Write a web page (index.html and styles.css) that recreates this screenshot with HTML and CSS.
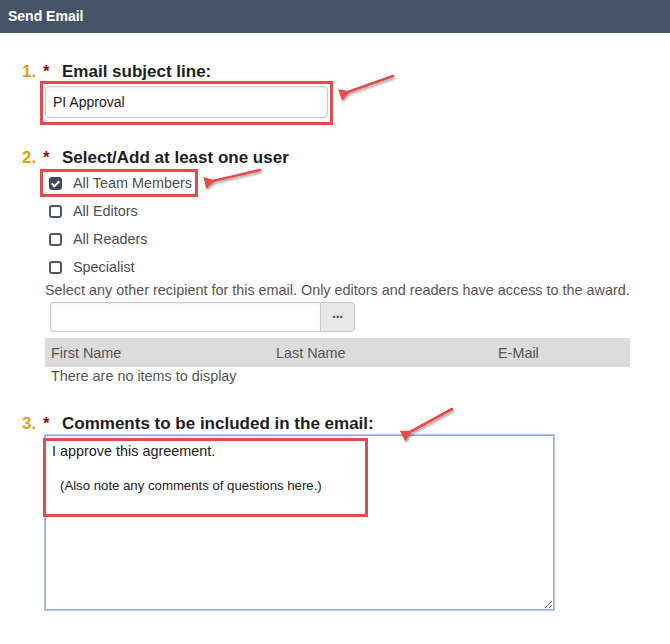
FILE: index.html
```html
<!DOCTYPE html>
<html lang="en">
<head>
    <meta charset="UTF-8">
    <title>Send Email</title>
    <link rel="stylesheet" href="styles.css">
</head>
<body>
    <div class="panel-title">Send Email</div>

    <div class="form">
        <div class="step step-subject">
            <h3 class="step-title"><span class="num">1.</span><span class="req">*</span>Email subject line:</h3>
            <div class="mark mark-input">
                <input class="text-input" type="text" value="PI Approval">
            </div>
        </div>

        <div class="step step-users">
            <h3 class="step-title"><span class="num">2.</span><span class="req">*</span>Select/Add at least one user</h3>
            <ul class="check-list">
                <li class="check-row marked"><span class="box checked"></span>All Team Members</li>
                <li class="check-row"><span class="box"></span>All Editors</li>
                <li class="check-row"><span class="box"></span>All Readers</li>
                <li class="check-row"><span class="box"></span>Specialist</li>
            </ul>
            <p class="hint">Select any other recipient for this email. Only editors and readers have access to the award.</p>
            <div class="picker">
                <input class="picker-input" type="text">
                <button class="picker-btn">&middot;&middot;&middot;</button>
            </div>
            <table class="grid">
                <thead>
                    <tr><th class="col-first">First Name</th><th class="col-last">Last Name</th><th>E-Mail</th></tr>
                </thead>
                <tbody>
                    <tr><td colspan="3">There are no items to display</td></tr>
                </tbody>
            </table>
        </div>

        <div class="step step-comments">
            <h3 class="step-title"><span class="num">3.</span><span class="req">*</span>Comments to be included in the email:</h3>
            <div class="comment-wrap">
                <div class="comment-box">
                    <div class="line-main">I approve this agreement.</div>
                    <div class="line-note">(Also note any comments of questions here.)</div>
                </div>
                <div class="mark mark-overlay"></div>
            </div>
        </div>
    </div>

    <!-- callout arrows -->
    <svg class="arrows" width="670" height="644" viewBox="0 0 670 644">
        <defs>
            <marker id="head" markerWidth="6" markerHeight="6" refX="1" refY="3" orient="auto" markerUnits="strokeWidth">
                <path d="M0,3 L4.2,0.7 L4.2,5.3 Z" fill="#e64b4b"/>
            </marker>
            <filter id="shade" x="-20%" y="-20%" width="140%" height="160%">
                <feDropShadow dx="1" dy="2" stdDeviation="1.2" flood-color="#000" flood-opacity="0.35"/>
            </filter>
        </defs>
        <g stroke="#e64b4b" stroke-width="2.6" stroke-linecap="round" fill="none" filter="url(#shade)">
            <line x1="393" y1="76" x2="348" y2="92" marker-end="url(#head)"/>
            <line x1="260" y1="170" x2="213" y2="181" marker-end="url(#head)"/>
            <line x1="452" y1="409" x2="410" y2="432" marker-end="url(#head)"/>
        </g>
    </svg>
</body>
</html>
```

FILE: styles.css
```css
body {
    margin: 0;
    font-family: "Liberation Sans", Arial, sans-serif;
    background: #fff;
    color: #222;
    position: relative;
    height: 644px;
    overflow: hidden;
}
.panel-title {
    height: 33px;
    line-height: 33px;
    padding-left: 8px;
    background: #465468;
    color: #fff;
    font-size: 14px;
    font-weight: bold;
}
.form {
    padding-left: 22px;
}
.step-title {
    margin: 0;
    font-size: 17px;
    line-height: 19px;
    font-weight: bold;
    color: #1e1e1e;
    display: flex;
}
.num {
    color: #e29c12;
    width: 21px;
}
.req {
    color: #a3070b;
    width: 19px;
}
.step-subject {
    padding-top: 29px;
}
.mark {
    border: 3px solid #e64b4b;
}
.mark-input {
    margin-left: 18px;
    padding: 2px;
    box-sizing: border-box;
    width: 293px;
    height: 44px;
}
.text-input {
    width: 283px;
    height: 32px;
    box-sizing: border-box;
    border: 1px solid #c8c8c8;
    border-radius: 4px;
    padding: 0 7px;
    font-family: inherit;
    font-size: 14px;
    color: #222;
    box-shadow: inset 0 1px 2px rgba(0, 0, 0, 0.08);
}
.step-users {
    padding-top: 23px;
}
.step-users .step-title {
    margin-bottom: 2px;
}
.check-list {
    list-style: none;
    margin: 0 0 0 18px;
    padding: 0;
}
.check-row {
    display: flex;
    align-items: center;
    width: fit-content;
    height: 28px;
    box-sizing: border-box;
    border: 3px solid transparent;
    padding: 0 3px 0 6px;
    font-size: 14.4px;
    color: #4d4d4d;
}
.check-row.marked {
    border-color: #e64b4b;
}
.box {
    width: 13px;
    height: 13px;
    box-sizing: border-box;
    border: 2px solid #4b5667;
    border-radius: 3px;
    margin-right: 11px;
    position: relative;
}
.box.checked {
    background: #3e4a5c;
    border-color: #3e4a5c;
}
.box.checked::after {
    content: "";
    position: absolute;
    left: 2px;
    top: 0;
    width: 3px;
    height: 6px;
    border: solid #fff;
    border-width: 0 2px 2px 0;
    transform: rotate(45deg);
}
.hint {
    margin: 1px 0 0 23px;
    font-size: 14.4px;
    line-height: 16px;
    color: #555;
}
.picker {
    display: flex;
    margin: 4px 0 0 28px;
    width: 305px;
    height: 30px;
}
.picker-input {
    flex: 1;
    border: 1px solid #c8c8c8;
    border-right: none;
    border-radius: 4px 0 0 4px;
    box-shadow: inset 0 1px 2px rgba(0, 0, 0, 0.08);
}
.picker-btn {
    width: 35px;
    border: 1px solid #c8c8c8;
    border-radius: 0 4px 4px 0;
    background: #e9e9e9;
    color: #3a4a5e;
    font-size: 14px;
    font-weight: bold;
    letter-spacing: -1px;
    padding: 0;
}
.grid {
    margin: 6px 0 0 23px;
    width: 585px;
    border-collapse: collapse;
    font-size: 14.4px;
    color: #555;
}
.grid th {
    background: #dcdcdc;
    height: 29px;
    padding: 0 0 0 6px;
    text-align: left;
    font-weight: normal;
}
.grid .col-first {
    width: 219px;
}
.grid .col-last {
    width: 216px;
}
.grid td {
    height: 18px;
    padding: 0 0 2px 6px;
}
.step-comments {
    padding-top: 27px;
}
.comment-wrap {
    position: relative;
    margin: 2px 0 0 23px;
    width: 509px;
}
.comment-box {
    height: 175px;
    box-sizing: border-box;
    border: 1px solid #8fa9f2;
    box-shadow: 0 0 0 1px #b4c6f7;
    padding: 7px 6px;
    resize: vertical;
    overflow: auto;
    color: #222;
}
.line-main {
    font-size: 14.4px;
    line-height: 16px;
}
.line-note {
    margin: 19px 0 0 8px;
    font-size: 13.2px;
    line-height: 16px;
}
.mark-overlay {
    position: absolute;
    left: -2px;
    top: 3px;
    width: 325px;
    height: 79px;
    box-sizing: border-box;
}
.arrows {
    position: absolute;
    left: 0;
    top: 0;
    pointer-events: none;
}
```
